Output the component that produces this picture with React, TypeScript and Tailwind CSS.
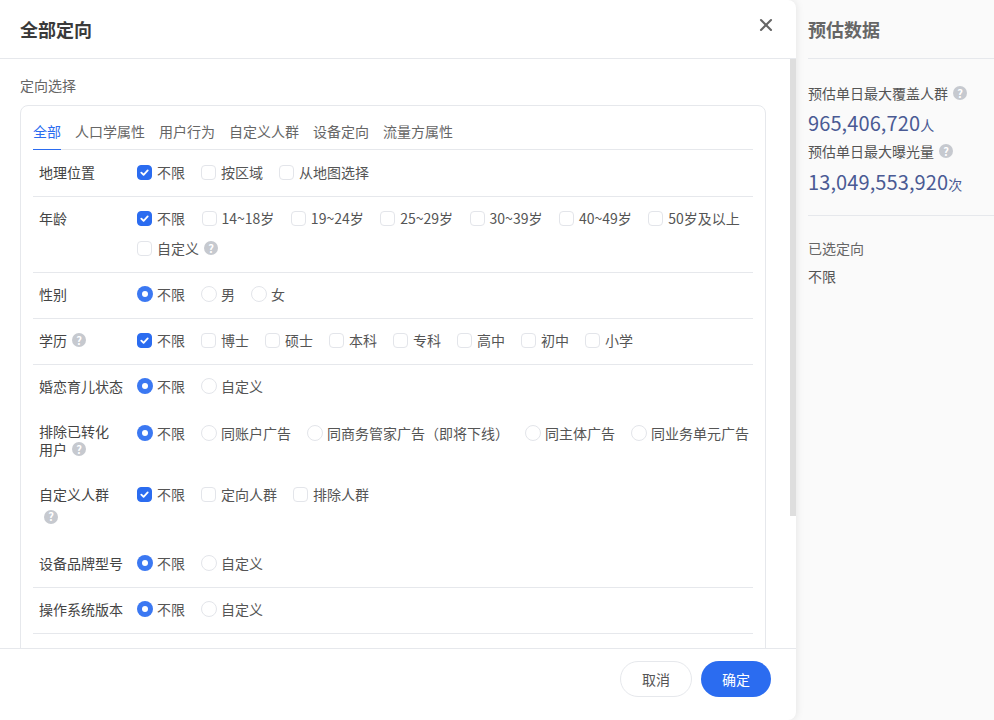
import { X } from "lucide-react";

const font = { fontFamily: '"Noto Sans CJK SC", "Noto Sans", sans-serif' };

const Help = ({ className = "" }: { className?: string }) => (
  <span className={`inline-flex h-[14px] w-[14px] items-center justify-center rounded-full bg-[#c6c9cf] text-[11px] font-bold leading-none text-white ${className}`}>
    ?
  </span>
);

const Check = ({ label, on }: { label: string; on?: boolean }) => (
  <label className="flex h-[22px] items-center">
    <span className={`mr-[5px] flex h-[15px] w-[15px] items-center justify-center rounded-[4px] border ${on ? "border-[#2b6cf0] bg-[#2b6cf0]" : "border-[#e3e5ea] bg-white"}`}>
      {on && (
        <svg viewBox="0 0 12 12" className="h-[11px] w-[11px]" fill="none" stroke="white" strokeWidth="2" strokeLinecap="round" strokeLinejoin="round">
          <path d="M2.5 6.2 5 8.5 9.5 3.8" />
        </svg>
      )}
    </span>
    <span className="text-[#555]">{label}</span>
  </label>
);

const Radio = ({ label, on }: { label: string; on?: boolean }) => (
  <label className="flex h-[22px] items-center">
    <span className={`mr-[4px] flex h-4 w-4 items-center justify-center rounded-full ${on ? "bg-[#3b78f2]" : "border border-[#e3e5ea] bg-white"}`}>
      {on && <span className="h-[6px] w-[6px] rounded-full bg-white" />}
    </span>
    <span className="text-[#555]">{label}</span>
  </label>
);

const Row = ({
  label,
  children,
  line = true,
  wide = false,
  pad = "pt-[10px] pb-[13px]",
  labelPad = "pt-[2px]",
  className = "",
}: {
  label: React.ReactNode;
  children: React.ReactNode;
  line?: boolean;
  wide?: boolean;
  pad?: string;
  labelPad?: string;
  className?: string;
}) => (
  <div className={`flex pl-[6px] ${pad} ${line ? "border-b border-[#e6e8ec]" : ""} ${className}`}>
    <div className={`w-[98px] shrink-0 leading-[18px] text-[#444] ${labelPad}`}>{label}</div>
    <div className={`flex flex-1 flex-wrap gap-y-[8px] ${wide ? "gap-x-[16.5px]" : "gap-x-[16px]"}`}>{children}</div>
  </div>
);

const tabs = ["全部", "人口学属性", "用户行为", "自定义人群", "设备定向", "流量方属性"];

export default function App() {
  return (
    <div style={font} className="flex h-[720px] w-[994px] overflow-hidden bg-[#fafafa] text-[14px]">
      {/* main modal */}
      <div className="relative z-10 flex h-full w-[796px] shrink-0 flex-col rounded-r-lg bg-white shadow-[0_0_8px_rgba(0,0,0,0.1)]">
        <div className="flex h-[59px] shrink-0 items-center justify-between border-b border-[#e6e8ec] pl-5 pr-[20px]">
          <h1 className="text-[18px] font-bold text-[#3a3a3a]">全部定向</h1>
          <X className="mb-[8px] h-[20px] w-[20px] text-[#666]" strokeWidth={2.5} />
        </div>

        <div className="flex min-h-0 flex-1">
          <div className="min-h-0 flex-1 overflow-hidden pl-5 pr-[24px]">
            <div className="pt-[16px] pb-[10px] leading-[20px] text-[#666]">定向选择</div>
            <div className="rounded-t-lg border border-[#e6e8ec] px-3 pb-[20px]">
              <div className="flex h-[44px] gap-[14px] border-b border-[#e6e8ec] pt-[15px] text-[#666]">
                {tabs.map((t, i) => (
                  <span key={t} className={`h-[29px] leading-[20px] ${i === 0 ? "border-b border-[#2b6cf0] text-[#2b6cf0]" : ""}`}>{t}</span>
                ))}
              </div>
              <div className="h-px" />
              <Row label="地理位置">
                <Check label="不限" on /><Check label="按区域" /><Check label="从地图选择" />
              </Row>
              <Row label="年龄" wide>
                <Check label="不限" on /><Check label="14~18岁" /><Check label="19~24岁" /><Check label="25~29岁" /><Check label="30~39岁" /><Check label="40~49岁" /><Check label="50岁及以上" />
                <label className="flex items-center">
                  <Check label="自定义" /><Help className="ml-[5px]" />
                </label>
              </Row>
              <Row label="性别">
                <Radio label="不限" on /><Radio label="男" /><Radio label="女" />
              </Row>
              <Row label={<span className="flex items-center gap-[5px]">学历<Help /></span>}>
                <Check label="不限" on /><Check label="博士" /><Check label="硕士" /><Check label="本科" /><Check label="专科" /><Check label="高中" /><Check label="初中" /><Check label="小学" />
              </Row>
              <Row label="婚恋育儿状态" line={false} className="h-[47px]">
                <Radio label="不限" on /><Radio label="自定义" />
              </Row>
              <Row
                label={
                  <div>
                    <div>排除已转化</div>
                    <div className="flex items-center gap-[5px]">用户<Help /></div>
                  </div>
                }
                line={false}
                labelPad="pt-0"
                className="h-[61px]"
              >
                <Radio label="不限" on /><Radio label="同账户广告" /><Radio label="同商务管家广告（即将下线）" /><Radio label="同主体广告" /><Radio label="同业务单元广告" />
              </Row>
              <Row label={<div>自定义人群<div className="mt-[3px] pl-[5px]"><Help /></div></div>} line={false} className="h-[68px]">
                <Check label="不限" on /><Check label="定向人群" /><Check label="排除人群" />
              </Row>
              <Row label="设备品牌型号" pad="pt-[11px] pb-[13px]">
                <Radio label="不限" on /><Radio label="自定义" />
              </Row>
              <Row label="操作系统版本">
                <Radio label="不限" on /><Radio label="自定义" />
              </Row>
              <div className="h-[60px]" />
            </div>
          </div>
          {/* scrollbar */}
          <div className="w-[6px] shrink-0">
            <div className="h-[457px] bg-[#dedede]" />
          </div>
        </div>

        <div className="flex h-[72px] shrink-0 justify-end gap-[9px] border-t border-[#e6e8ec] pt-[12px] pr-[25px]">
          <button className="h-[36px] w-[72px] rounded-full border border-[#e6e8ec] bg-white text-[#555]">取消</button>
          <button className="h-[36px] w-[70px] rounded-full bg-[#2b6cf0] text-white">确定</button>
        </div>
      </div>

      {/* estimate panel */}
      <aside className="flex-1 pl-3">
        <div className="flex h-[59px] items-center border-b border-[#e6e8ec]">
          <h2 className="text-[18px] font-bold text-[#666]">预估数据</h2>
        </div>
        <div className="border-b border-[#e6e8ec] pt-[23px] pb-[18px]">
          <div className="flex h-[22px] items-center gap-[5px] text-[#555]">预估单日最大覆盖人群<Help /></div>
          <div className="mt-[4px] h-[32px] text-[20px] leading-[30px] tracking-[0.1px] text-[#4a5a94]">965,406,720<span className="text-[14px]">人</span></div>
          <div className="flex h-[22px] items-center gap-[5px] text-[#555]">预估单日最大曝光量<Help /></div>
          <div className="mt-[5px] h-[30px] text-[20px] leading-[30px] tracking-[0.1px] text-[#4a5a94]">13,049,553,920<span className="text-[14px]">次</span></div>
        </div>
        <div className="pt-[22px] leading-[20px] text-[#666]">已选定向</div>
        <div className="mt-[8px] leading-[20px] text-[#555]">不限</div>
      </aside>
    </div>
  );
}
